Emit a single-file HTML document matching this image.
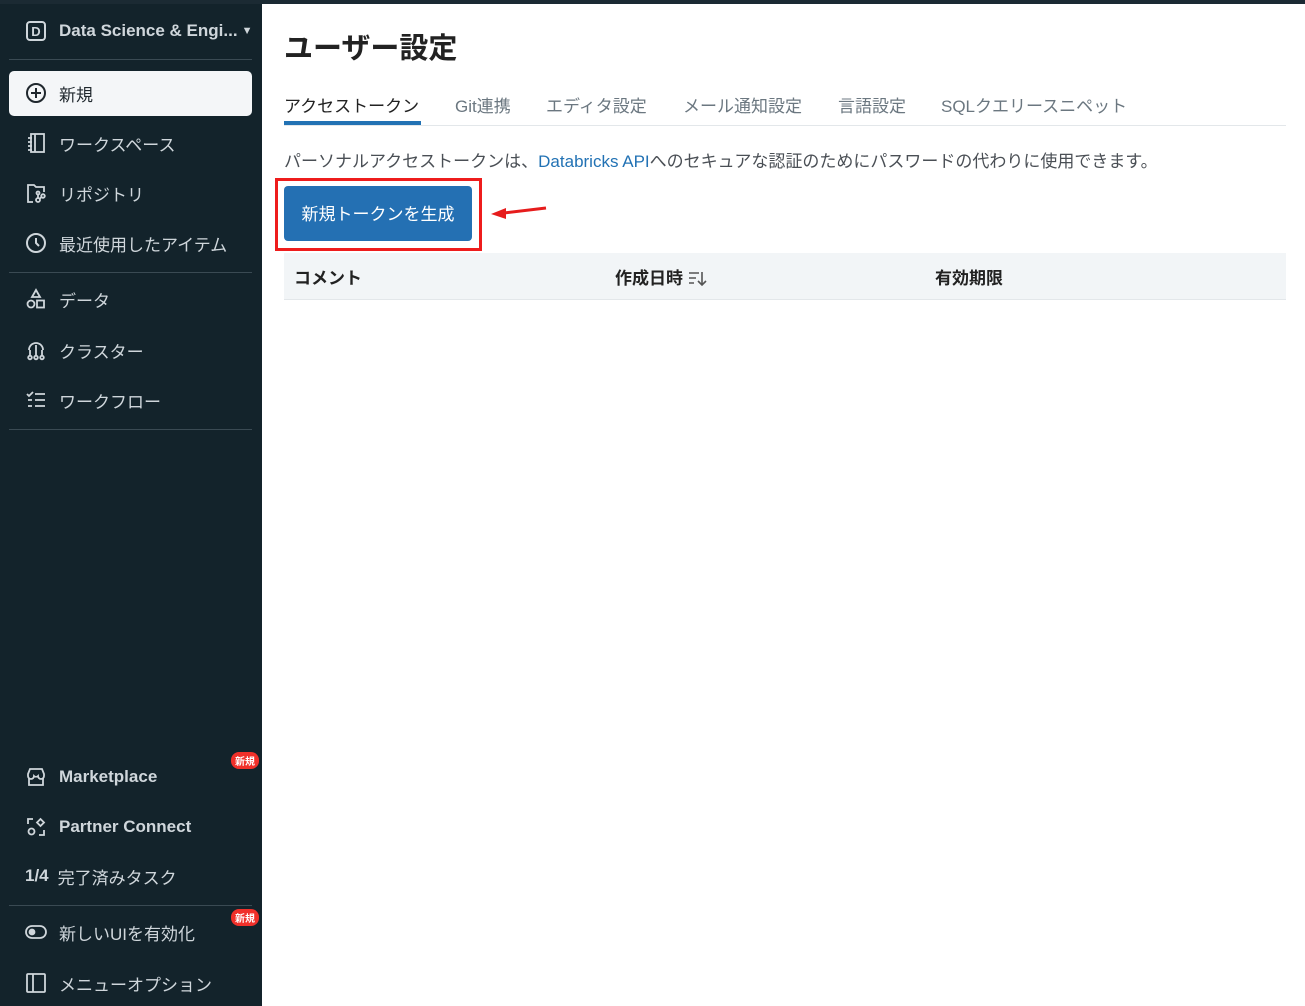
<!DOCTYPE html>
<html><head><meta charset="utf-8"><style>
*{margin:0;padding:0;box-sizing:border-box}
body{width:1305px;height:1006px;overflow:hidden;background:#fff;font-family:"Liberation Sans","Noto Sans CJK JP",sans-serif;position:relative}
.topbar{position:absolute;left:0;top:0;width:1305px;height:4px;background:#1b2a33}
.side{position:absolute;left:0;top:0;width:262px;height:1006px;background:#13232b;color:#cfd6db}
.it{position:absolute;left:25px;height:24px;display:flex;align-items:center;font-size:17px;white-space:nowrap}
.it svg{width:22px;height:22px;margin-right:12px;flex:none}
.sep{position:absolute;left:9px;width:243px;height:1px;background:#3a4a53}
.badge{position:absolute;left:231px;background:#f0302a;color:#fff;font-size:10px;border-radius:8px;padding:1px 4px;font-weight:bold}
h1{position:absolute;left:284px;top:25px;font-size:29px;font-weight:bold;color:#222;white-space:nowrap}
.tabs{position:absolute;left:284px;top:92px;width:1002px;height:34px;border-bottom:1px solid #e3e7ea}
.tab{position:absolute;top:0;font-size:17px;color:#6b7780;white-space:nowrap}
.tab.a{color:#222}
.ul{position:absolute;left:0;top:29px;width:137px;height:4px;background:#2272b4}
.desc{position:absolute;left:284px;top:147px;font-size:17px;color:#4a4f55;white-space:nowrap}
.desc span{color:#2272b4}
.btn{position:absolute;left:284px;top:186px;width:188px;height:55px;background:#2470b3;border-radius:4px;color:#fff;font-size:17px;display:flex;align-items:center;justify-content:center;padding-bottom:2px}
.red{position:absolute;left:275px;top:178px;width:207px;height:73px;border:3px solid #ee1c1c}
.th{position:absolute;left:284px;top:253px;width:1002px;height:47px;background:#f2f5f7;border-bottom:1px solid #e3e7ea}
.th div{position:absolute;top:11px;font-size:17px;font-weight:bold;color:#222;white-space:nowrap}
</style></head><body>
<div class="side">
 <div class="it" style="top:19px;font-size:17px;font-weight:bold">
  <svg viewBox="0 0 22 22"><rect x="2" y="2" width="18" height="18" rx="3" fill="none" stroke="#cfd6db" stroke-width="2"/><text x="11" y="16" font-size="13" font-weight="bold" text-anchor="middle" fill="#cfd6db" font-family="Liberation Sans">D</text></svg>Data Science &amp; Engi...<span style="font-size:11px;margin-left:4px">▼</span></div>
 <div class="sep" style="top:59px"></div>
 <div style="position:absolute;left:9px;top:71px;width:243px;height:45px;background:#f4f6f8;border-radius:5px"></div>
 <div class="it" style="top:81px;color:#1f272d">
  <svg viewBox="0 0 22 22"><circle cx="11" cy="11" r="9" fill="none" stroke="#1f272d" stroke-width="2"/><path d="M11 6v10M6 11h10" stroke="#1f272d" stroke-width="2"/></svg>新規</div>
 <div class="it" style="top:131px"><svg viewBox="0 0 22 22" fill="none" stroke="#cfd6db" stroke-width="1.8"><rect x="6" y="2" width="13" height="18"/><path d="M10 2v18M3 6h4M3 10h4M3 14h4M3 18h4"/></svg>ワークスペース</div>
 <div class="it" style="top:181px"><svg viewBox="0 0 22 22" fill="none" stroke="#cfd6db" stroke-width="1.8"><path d="M8 20H3V3h6l2 2h8v5"/><circle cx="13" cy="18" r="2"/><circle cx="13" cy="11" r="1.5"/><circle cx="18" cy="14" r="1.8"/><path d="M13 12.5v3.5M14.5 17l2-2"/></svg>リポジトリ</div>
 <div class="it" style="top:231px"><svg viewBox="0 0 22 22" fill="none" stroke="#cfd6db" stroke-width="2"><circle cx="11" cy="11" r="9"/><path d="M11 6v5l3 3"/></svg>最近使用したアイテム</div>
 <div class="sep" style="top:272px"></div>
 <div class="it" style="top:287px"><svg viewBox="0 0 22 22" fill="none" stroke="#cfd6db" stroke-width="1.8"><path d="M11 2l4 7H7z"/><circle cx="6" cy="16" r="3.5"/><rect x="12" y="12.5" width="7" height="7"/></svg>データ</div>
 <div class="it" style="top:338px"><svg viewBox="0 0 22 22" fill="none" stroke="#cfd6db" stroke-width="1.8"><path d="M4 11a7 7 0 0 1 14 0"/><path d="M11 6v11M5 11v6M17 11v6"/><circle cx="5" cy="18.5" r="1.8"/><circle cx="11" cy="18.5" r="1.8"/><circle cx="17" cy="18.5" r="1.8"/></svg>クラスター</div>
 <div class="it" style="top:388px"><svg viewBox="0 0 22 22" fill="none" stroke="#cfd6db" stroke-width="1.8"><path d="M2 5l2 2 4-4M10 5h10M10 11h10M10 17h10M3 11h4M3 17h4"/></svg>ワークフロー</div>
 <div class="sep" style="top:429px"></div>
 <div class="badge" style="top:752px">新規</div>
 <div class="it" style="top:765px;font-weight:bold"><svg viewBox="0 0 22 22" fill="none" stroke="#cfd6db" stroke-width="1.8"><path d="M3 8l2-5h12l2 5v2a3 3 0 0 1-6 0 3 3 0 0 1-4 0 3 3 0 0 1-6 0z"/><path d="M4 12v7h14v-7"/></svg>Marketplace</div>
 <div class="it" style="top:815px;font-weight:bold"><svg viewBox="0 0 22 22" fill="none" stroke="#cfd6db" stroke-width="1.8"><path d="M3 8V3h5M14 19h5v-5"/><circle cx="6.5" cy="15.5" r="3"/><path d="M15.5 3l3.5 3.5-3.5 3.5-3.5-3.5z"/></svg>Partner Connect</div>
 <div class="it" style="top:864px"><b style="margin-right:9px">1/4</b>完了済みタスク</div>
 <div class="sep" style="top:905px"></div>
 <div class="badge" style="top:909px">新規</div>
 <div class="it" style="top:920px"><svg viewBox="0 0 22 22" fill="none" stroke="#cfd6db" stroke-width="1.8"><rect x="1" y="5" width="20" height="12" rx="6"/><circle cx="7" cy="11" r="2.5" fill="#cfd6db"/></svg>新しいUIを有効化</div>
 <div class="it" style="top:971px"><svg viewBox="0 0 22 22" fill="none" stroke="#cfd6db" stroke-width="1.8"><rect x="2" y="2" width="18" height="18" rx="1"/><path d="M8 2v18"/></svg>メニューオプション</div>
</div>
<div class="topbar"></div>
<h1>ユーザー設定</h1>
<div class="tabs">
 <div class="tab a" style="left:0">アクセストークン</div>
 <div class="tab" style="left:171px">Git連携</div>
 <div class="tab" style="left:262px">エディタ設定</div>
 <div class="tab" style="left:399px">メール通知設定</div>
 <div class="tab" style="left:554px">言語設定</div>
 <div class="tab" style="left:657px">SQLクエリースニペット</div>
 <div class="ul"></div>
</div>
<div class="desc">パーソナルアクセストークンは、<span>Databricks API</span>へのセキュアな認証のためにパスワードの代わりに使用できます。</div>
<div class="red"></div>
<div class="btn">新規トークンを生成</div>
<svg style="position:absolute;left:488px;top:200px" width="62" height="22"><path d="M58 8L16 13" stroke="#e61c1c" stroke-width="3"/><path d="M3 14l15-6v11z" fill="#e61c1c"/></svg>
<div class="th">
 <div style="left:10px">コメント</div>
 <div style="left:331px">作成日時 <svg width="20" height="18" viewBox="0 0 20 18" style="vertical-align:-3px" fill="none" stroke="#555" stroke-width="1.6"><path d="M1 4h10M1 9h7M1 14h5M14 3v13M10 12l4 4 4-4"/></svg></div>
 <div style="left:651px">有効期限</div>
</div>
</body></html>
